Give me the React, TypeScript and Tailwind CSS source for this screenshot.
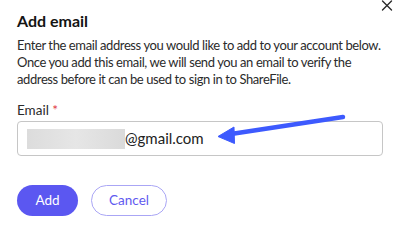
export default function App() {
  return (
    <div className="relative w-[400px] h-[225px] overflow-hidden bg-white px-[17px] font-['Lato',sans-serif] text-[#2b2b2b]">
      {/* close */}
      <button className="absolute right-[7px] top-0 w-[12px] h-[12px]" aria-label="Close">
        <svg width="12" height="12" viewBox="0 0 12 12">
          <path d="M1.5 1L10.5 10M10.5 1L1.5 10" stroke="#2b2b2b" strokeWidth="1.4" strokeLinecap="round" />
        </svg>
      </button>

      <h2 className="pt-[10px] text-[16px] leading-[22px] font-bold text-[#141414]">Add email</h2>
      <p className="mt-[5px] -mr-[8px] text-[13px] leading-[17px] tracking-[-0.4px]">
        Enter the email address you would like to add to your account below. Once you add this email, we will send you an email to verify the address before it can be used to sign in to ShareFile.
      </p>

      <label className="mt-[14px] block text-[13.5px] leading-[17px]">
        Email <span className="text-[#e0383e]">*</span>
      </label>
      <div className="mt-[2px] flex h-[35px] items-center rounded-[4px] border border-[#c6c6c6] pl-[9px]">
        <span className="h-[20px] w-[98px] bg-gradient-to-r from-[#dcdcdc] via-[#e6e6e6] to-[#dadada]" />
        <span className="text-[15px] text-[#222]">@gmail.com</span>
      </div>

      <div className="mt-[29px] flex gap-[13px]">
        <button className="h-[31px] w-[61px] rounded-full bg-[#5b57f1] text-[13.5px] text-white">Add</button>
        <button className="h-[31px] w-[76px] rounded-full border border-[#aaa6f5] text-[13.5px] text-[#5f5af0]">Cancel</button>
      </div>

      {/* annotation arrow */}
      <svg className="pointer-events-none absolute left-0 top-0" width="400" height="225" viewBox="0 0 400 225">
        <path d="M343 117L231 134" stroke="#3d5afe" strokeWidth="4.5" strokeLinecap="round" />
        <path d="M218 136.5L234 127L234.5 143.5Z" fill="#3d5afe" stroke="#3d5afe" strokeWidth="1" strokeLinejoin="round" />
      </svg>
    </div>
  )
}
